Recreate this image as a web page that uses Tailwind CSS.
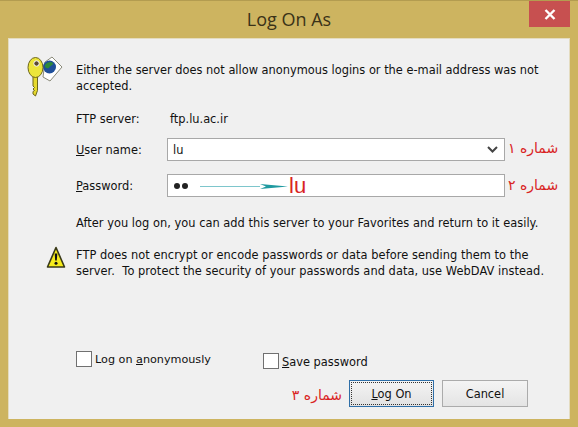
<!DOCTYPE html>
<html lang="en">
<head>
<meta charset="UTF-8">
<title>Log On As</title>
<script src="https://cdn.jsdelivr.net/npm/@tailwindcss/browser@4"></script>
</head>
<body class="w-[578px] h-[427px] overflow-hidden bg-[#cdb460] font-['DejaVu_Sans',sans-serif] text-[11.4px] leading-[16px] text-[#111]">
  <div class="relative flex flex-col w-[578px] h-[427px] border-t border-[#b39c50]">
    <!-- title bar -->
    <div class="flex items-center justify-center h-[37px] shrink-0 text-[18px] font-['Open_Sans',sans-serif] text-[#3a3218] pb-[1px]">Log On As</div>
    <button class="absolute top-0 right-[8px] flex items-center justify-center w-[41px] h-[26px] bg-[#c75050]">
      <svg width="12" height="11" viewBox="0 0 12 11"><path d="M1.500 1 10.500 10M10.500 1 1.500 10" stroke="#fff" stroke-width="2.400"/></svg>
    </button>

    <!-- client area -->
    <div class="flex flex-col mx-[8px] h-[381px] bg-[#f0f0f0] border border-[#e4dcc0] border-b-0 pl-[67px] pr-[20px] relative">
      <div class="relative mt-[23px]">
        <svg class="absolute left-[-50px] top-[-6px]" width="38" height="42" viewBox="0 0 38 42">
          <path d="M19 6 26 1 36 11 24 25 17 21Z" fill="#fff" stroke="#8a8a7a"/>
          <circle cx="23.500" cy="11" r="6.500" fill="#1f4f9a"/>
          <path d="M19 9c2-3 6-4 8-2 0 3-3 2-4 5-2 1-5-1-4-3Z" fill="#2f8a3a"/>
          <path d="M11.500 20v14.500L9.500 40 7 38v-2.500l1.500-1L7 33l1.500-1.500L7 30V20Z" fill="#e6d92c" stroke="#6d661a"/>
          <ellipse cx="9.500" cy="11.500" rx="7.500" ry="10" fill="#ece53a" stroke="#6d661a"/>
          <circle cx="10.500" cy="7.500" r="2.700" fill="#5a4a30" stroke="#fff"/>
        </svg>
        <p class="w-[480px]">Either the server does not allow anonymous logins or the e-mail address was not accepted.</p>
      </div>

      <div class="flex items-center mt-[17px] h-[16px]">
        <span class="w-[94px]">FTP server:</span>
        <span>ftp.lu.ac.ir</span>
      </div>

      <!-- user name -->
      <div class="flex items-center mt-[11px] h-[23px]">
        <label class="w-[91px]"><span class="underline">U</span>ser name:</label>
        <div class="flex items-center justify-between w-[338px] h-[23px] px-[5px] bg-white border border-[#a8a8a8]">
          <span>lu</span>
          <svg class="mr-[1px]" width="11" height="7" viewBox="0 0 11 7"><path d="M1 1 5.500 5.500 10 1" fill="none" stroke="#444" stroke-width="2"/></svg>
        </div>
      </div>

      <!-- password -->
      <div class="flex items-center mt-[13px] h-[23px]">
        <label class="w-[91px]"><span class="underline">P</span>assword:</label>
        <div class="relative flex items-center w-[338px] h-[23px] px-[6px] gap-[2px] bg-white border border-[#a8a8a8]">
          <span class="w-[6px] h-[6px] rounded-full bg-[#222]"></span>
          <span class="w-[6px] h-[6px] rounded-full bg-[#222]"></span>
          <svg class="absolute left-[32px] top-[8px]" width="90" height="7" viewBox="0 0 90 7">
            <path d="M0 3.500H60" stroke="#7ec6cc" stroke-width="1"/>
            <path d="M60 1 88 3.500 60 6 66 3.500Z" fill="#1f9aa0"/>
          </svg>
          <span class="absolute left-[121px] top-[-1px] font-['Liberation_Sans',sans-serif] text-[22px] leading-[24px] text-[#d92424]">lu</span>
        </div>
      </div>

      <p class="mt-[18px] tracking-[0.03px]">After you log on, you can add this server to your Favorites and return to it easily.</p>

      <div class="relative mt-[16px]">
        <svg class="absolute left-[-30px] top-[-1px]" width="20" height="23" viewBox="0 0 20 23">
          <path d="M10 1.500 18.500 21H1.500Z" fill="#f6ec1c" stroke="#3a3a18" stroke-width="1.600" stroke-linejoin="round"/>
          <path d="M8.700 7.500h2.600l-.5 7H9.200Z" fill="#111"/>
          <circle cx="10" cy="17.300" r="1.500" fill="#111"/>
        </svg>
        <p class="w-[480px] tracking-[0.05px]">FTP does not encrypt or encode passwords or data before sending them to the server.&nbsp; To protect the security of your passwords and data, use WebDAV instead.</p>
      </div>

      <!-- options -->
      <div class="flex items-start mt-[72px] h-[18px]">
        <label class="flex items-center gap-[3px] w-[187px] mt-[-1px]">
          <span class="w-[16px] h-[16px] bg-white border border-[#707070]"></span>
          <span class="text-[11.2px] pt-[2px]">Log on <span class="underline">a</span>nonymously</span>
        </label>
        <label class="flex items-center gap-[3px] mt-[1px]">
          <span class="w-[16px] h-[16px] bg-white border border-[#707070]"></span>
          <span class="pt-[2px]"><span class="underline">S</span>ave password</span>
        </label>
      </div>

      <!-- buttons -->
      <div class="flex items-center mt-[11px] ml-[206px] gap-[8px]">
        <span dir="rtl" class="w-[60px] text-[14px] text-[#d92424] whitespace-nowrap pt-[2px]">شماره ۳</span>
        <button class="w-[85px] h-[27px] ml-[-1px] bg-gradient-to-b from-[#f4f4f4] to-[#e2e2e2] border border-[#2f6fa8] outline-1 outline-dotted outline-offset-[-3px] outline-[#333]"><span class="underline">L</span>og On</button>
        <button class="w-[86px] h-[27px] bg-gradient-to-b from-[#f4f4f4] to-[#e4e4e4] border border-[#ababab]">Cancel</button>
      </div>

      <span dir="rtl" class="absolute left-[499px] top-[101px] text-[14px] text-[#d92424] whitespace-nowrap">شماره ۱</span>
      <span dir="rtl" class="absolute left-[499px] top-[138px] text-[14px] text-[#d92424] whitespace-nowrap">شماره ۲</span>
    </div>
  </div>
</body>
</html>
